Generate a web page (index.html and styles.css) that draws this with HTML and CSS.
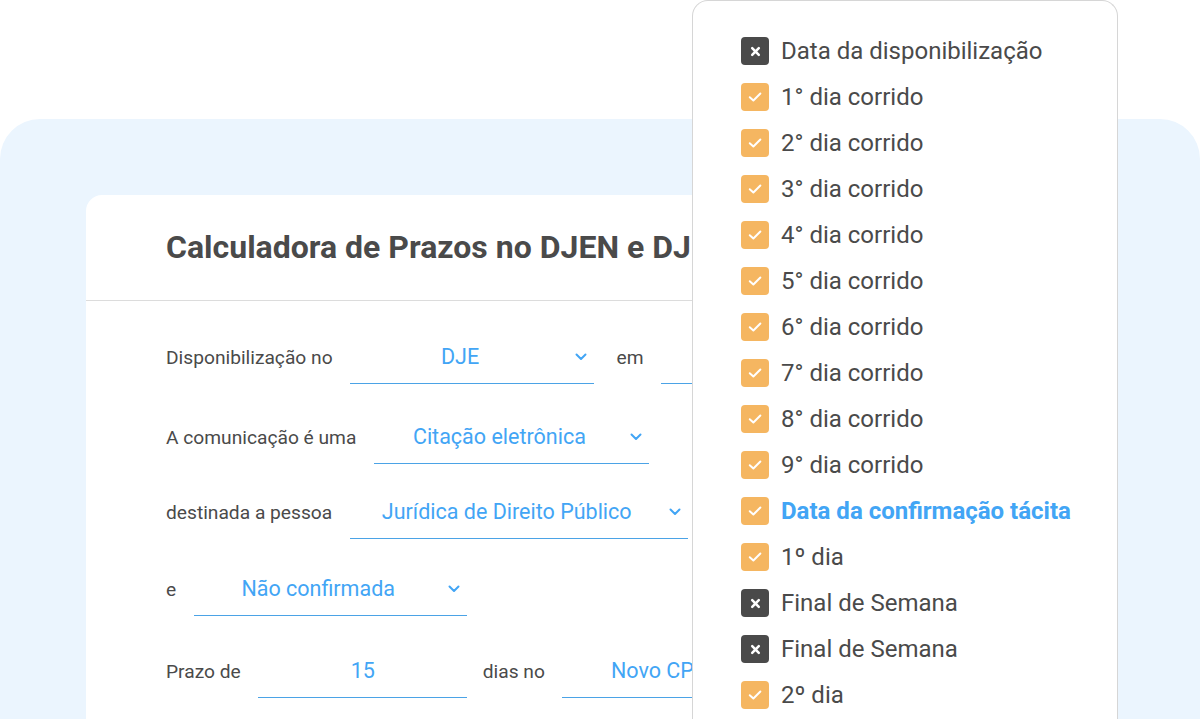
FILE: index.html
```html
<!DOCTYPE html>
<html lang="pt-BR">
<head>
<meta charset="utf-8">
<title>Calculadora de Prazos</title>
<link rel="stylesheet" href="styles.css">
</head>
<body>
<div class="page">
  <div class="panel">
    <div class="card">
      <div class="card-header">
        <h1 class="title">Calculadora de Prazos no DJEN e DJE</h1>
      </div>
      <div class="form">
        <div class="row">
          <span class="label">Disponibilização no</span>
          <div class="select w-dje"><span class="value">DJE</span><svg class="chev" viewBox="0 0 12 8"><path d="M1.5 1.5 6 6l4.5-4.5"/></svg></div>
          <span class="label label-em">em</span>
          <div class="select w-date"><span class="value"></span></div>
        </div>
        <div class="row row-2">
          <span class="label">A comunicação é uma</span>
          <div class="select w-tipo"><span class="value">Citação eletrônica</span><svg class="chev" viewBox="0 0 12 8"><path d="M1.5 1.5 6 6l4.5-4.5"/></svg></div>
        </div>
        <div class="row row-3">
          <span class="label">destinada a pessoa</span>
          <div class="select w-pessoa"><span class="value">Jurídica de Direito Público</span><svg class="chev" viewBox="0 0 12 8"><path d="M1.5 1.5 6 6l4.5-4.5"/></svg></div>
        </div>
        <div class="row row-4">
          <span class="label">e</span>
          <div class="select w-conf"><span class="value">Não confirmada</span><svg class="chev" viewBox="0 0 12 8"><path d="M1.5 1.5 6 6l4.5-4.5"/></svg></div>
        </div>
        <div class="row row-5">
          <span class="label">Prazo de</span>
          <div class="select input w-prazo"><span class="value">15</span></div>
          <span class="label label-dias">dias no</span>
          <div class="select w-cpc"><span class="value">Novo CPC</span><svg class="chev" viewBox="0 0 12 8"><path d="M1.5 1.5 6 6l4.5-4.5"/></svg></div>
        </div>
      </div>
    </div>
  </div>

  <div class="dropdown">
    <ul class="list">
      <li class="item"><span class="box box-x"><svg viewBox="0 0 10 10"><path d="M2 2l6 6M8 2 2 8"/></svg></span>Data da disponibilização</li>
      <li class="item"><span class="box box-ok"><svg viewBox="0 0 12 10"><path d="M1.5 5.2 4.6 8l6-6"/></svg></span>1° dia corrido</li>
      <li class="item"><span class="box box-ok"><svg viewBox="0 0 12 10"><path d="M1.5 5.2 4.6 8l6-6"/></svg></span>2° dia corrido</li>
      <li class="item"><span class="box box-ok"><svg viewBox="0 0 12 10"><path d="M1.5 5.2 4.6 8l6-6"/></svg></span>3° dia corrido</li>
      <li class="item"><span class="box box-ok"><svg viewBox="0 0 12 10"><path d="M1.5 5.2 4.6 8l6-6"/></svg></span>4° dia corrido</li>
      <li class="item"><span class="box box-ok"><svg viewBox="0 0 12 10"><path d="M1.5 5.2 4.6 8l6-6"/></svg></span>5° dia corrido</li>
      <li class="item"><span class="box box-ok"><svg viewBox="0 0 12 10"><path d="M1.5 5.2 4.6 8l6-6"/></svg></span>6° dia corrido</li>
      <li class="item"><span class="box box-ok"><svg viewBox="0 0 12 10"><path d="M1.5 5.2 4.6 8l6-6"/></svg></span>7° dia corrido</li>
      <li class="item"><span class="box box-ok"><svg viewBox="0 0 12 10"><path d="M1.5 5.2 4.6 8l6-6"/></svg></span>8° dia corrido</li>
      <li class="item"><span class="box box-ok"><svg viewBox="0 0 12 10"><path d="M1.5 5.2 4.6 8l6-6"/></svg></span>9° dia corrido</li>
      <li class="item item-strong"><span class="box box-ok"><svg viewBox="0 0 12 10"><path d="M1.5 5.2 4.6 8l6-6"/></svg></span>Data da confirmação tácita</li>
      <li class="item"><span class="box box-ok"><svg viewBox="0 0 12 10"><path d="M1.5 5.2 4.6 8l6-6"/></svg></span>1º dia</li>
      <li class="item"><span class="box box-x"><svg viewBox="0 0 10 10"><path d="M2 2l6 6M8 2 2 8"/></svg></span>Final de Semana</li>
      <li class="item"><span class="box box-x"><svg viewBox="0 0 10 10"><path d="M2 2l6 6M8 2 2 8"/></svg></span>Final de Semana</li>
      <li class="item"><span class="box box-ok"><svg viewBox="0 0 12 10"><path d="M1.5 5.2 4.6 8l6-6"/></svg></span>2º dia</li>
    </ul>
  </div>
</div>
</body>
</html>
```

FILE: styles.css
```css
* { box-sizing: border-box; }

html, body {
  margin: 0;
  padding: 0;
  width: 1200px;
  height: 719px;
  overflow: hidden;
  background: #ffffff;
  font-family: Roboto, "Noto Sans", "Liberation Sans", sans-serif;
  color: #4a4a4a;
}

.page {
  position: relative;
  width: 1200px;
  height: 719px;
  padding-top: 119px;
  overflow: hidden;
}

.panel {
  height: 600px;
  background: #ebf5fe;
  border-radius: 40px 40px 0 0;
  padding: 76px 86px 0 86px;
}

.card {
  height: 100%;
  background: #ffffff;
  border-radius: 16px 16px 0 0;
}

.card-header {
  height: 106px;
  padding: 34px 80px 0 80px;
  border-bottom: 1px solid #dcdcdc;
}

.title {
  margin: 0;
  font-size: 32px;
  line-height: 36px;
  font-weight: 700;
  color: #4a4a4a;
  white-space: nowrap;
}

.form {
  padding: 30px 80px 0 80px;
  display: flex;
  flex-direction: column;
}

.row {
  display: flex;
  align-items: center;
  gap: 17.5px;
  height: 52px;
}

.row-2 { margin-top: 28px; }
.row-3 { margin-top: 23px; }
.row-4 { margin-top: 25px; }
.row-5 { margin-top: 30px; }

.label {
  font-size: 19.2px;
  color: #4a4a4a;
  white-space: nowrap;
}

.label-em { margin-left: 5px; }
.label-dias { margin-left: -2px; }

.select {
  position: relative;
  flex: none;
  height: 53px;
  display: flex;
  align-items: center;
  justify-content: center;
  padding-right: 24px;
  border-bottom: 1px solid #4ba3e6;
  margin-top: 1px;
}

.select.input { padding-right: 0; }

.value {
  font-size: 21.5px;
  color: #42a5f5;
  white-space: nowrap;
  padding-bottom: 2px;
}

.chev {
  position: absolute;
  right: 7px;
  top: 22px;
  width: 12px;
  height: 8px;
  fill: none;
  stroke: #42a5f5;
  stroke-width: 2;
  stroke-linecap: round;
  stroke-linejoin: round;
}

.w-dje { width: 244px; }
.w-date { width: 200px; }
.w-tipo { width: 275px; }
.w-pessoa { width: 338px; }
.w-conf { width: 273px; }
.w-prazo { width: 209px; }
.w-cpc { width: 218px; }

.dropdown {
  position: absolute;
  top: 0;
  left: 692px;
  width: 426px;
  height: 719px;
  background: #ffffff;
  border: 1px solid #d6d6d6;
  border-bottom: none;
  border-radius: 16px 16px 0 0;
}

.list {
  list-style: none;
  margin: 0;
  padding: 27px 0 0 48px;
}

.item {
  display: flex;
  align-items: center;
  gap: 12px;
  height: 46px;
  font-size: 24px;
  color: #4a4a4a;
  white-space: nowrap;
}

.item-strong {
  color: #42a5f5;
  font-weight: 700;
}

.box {
  flex: none;
  width: 28px;
  height: 28px;
  border-radius: 4px;
  display: flex;
  align-items: center;
  justify-content: center;
}

.box svg {
  fill: none;
  stroke: #ffffff;
  stroke-linecap: round;
  stroke-linejoin: round;
}

.box-ok { background: #f5b661; }
.box-ok svg { width: 14px; height: 12px; stroke-width: 1.7; }

.box-x { background: #4a4a4a; }
.box-x svg { width: 11px; height: 11px; stroke-width: 2.3; }
```
